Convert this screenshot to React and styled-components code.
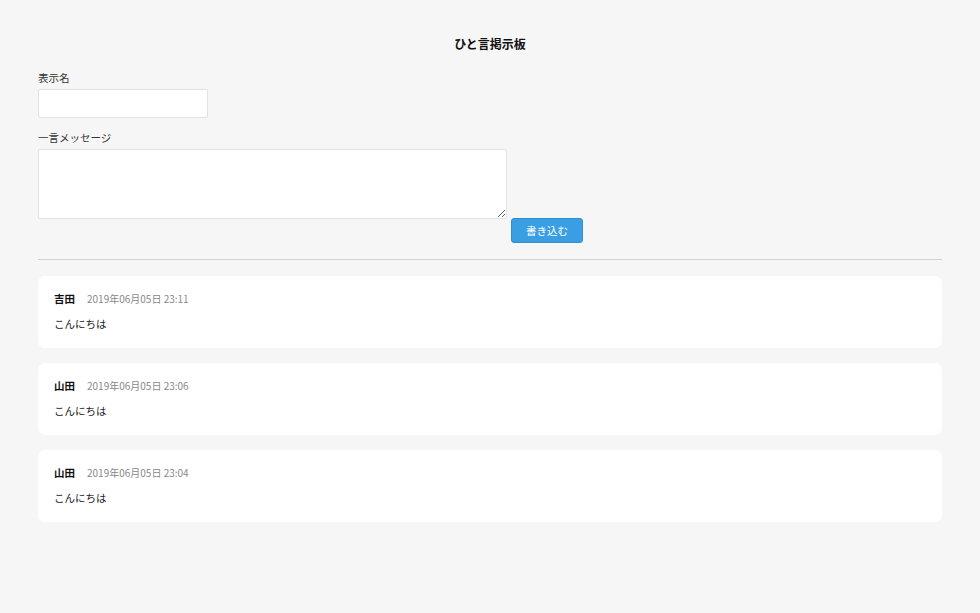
import React from "react";
import styled, { createGlobalStyle } from "styled-components";

const posts = [
  { name: "吉田", date: "2019年06月05日 23:11", body: "こんにちは" },
  { name: "山田", date: "2019年06月05日 23:06", body: "こんにちは" },
  { name: "山田", date: "2019年06月05日 23:04", body: "こんにちは" },
];

function App() {
  return (
    <>
      <GlobalStyle />
      <Page>
        <Title>ひと言掲示板</Title>
        <form onSubmit={(e) => e.preventDefault()}>
          <Field>
            <Label>表示名</Label>
            <NameInput type="text" />
          </Field>
          <Field>
            <Label>一言メッセージ</Label>
            <MessageRow>
              <MessageArea />
              <SubmitButton type="submit">書き込む</SubmitButton>
            </MessageRow>
          </Field>
        </form>
        <Divider />
        <PostList>
          {posts.map((post, i) => (
            <Card key={i}>
              <Meta>
                <Name>{post.name}</Name>
                <Time>{post.date}</Time>
              </Meta>
              <Body>{post.body}</Body>
            </Card>
          ))}
        </PostList>
      </Page>
    </>
  );
}

export default App;

const GlobalStyle = createGlobalStyle`
  html, body {
    margin: 0;
    padding: 0;
    background: #f6f6f6;
    color: #222;
    font-family: "Noto Sans CJK JP", "Noto Sans", sans-serif;
  }
`;

const Page = styled.div`
  padding: 34px 38px 40px;
`;

const Title = styled.h1`
  margin: 0 0 17px;
  text-align: center;
  font-size: 12px;
  font-weight: bold;
  line-height: 20px;
  color: #111;
`;

const Field = styled.div`
  margin-bottom: 13px;
`;

const Label = styled.label`
  display: block;
  font-size: 10.5px;
  line-height: 14px;
  margin-bottom: 4px;
  color: #333;
`;

const NameInput = styled.input`
  box-sizing: border-box;
  display: block;
  width: 170px;
  height: 29px;
  border: 1px solid #e2e2e2;
  border-radius: 2px;
  background: #fff;
  outline: none;
`;

const MessageRow = styled.div`
  display: flex;
  align-items: flex-start;
`;

const MessageArea = styled.textarea`
  box-sizing: border-box;
  width: 469px;
  height: 70px;
  border: 1px solid #e2e2e2;
  border-radius: 2px;
  background: #fff;
  outline: none;
  margin: 0;
`;

const SubmitButton = styled.button`
  box-sizing: border-box;
  width: 72px;
  height: 25px;
  margin: 69px 0 0 4px;
  border: 1px solid #2f8fd0;
  border-radius: 3px;
  background: #3a9fe2;
  color: #fff;
  font-family: inherit;
  font-size: 10.5px;
  cursor: pointer;
`;

const Divider = styled.hr`
  margin: 16px 0 16px;
  border: none;
  border-top: 1px solid #d2d2d2;
`;

const PostList = styled.div`
  display: flex;
  flex-direction: column;
  gap: 15px;
`;

const Card = styled.div`
  box-sizing: border-box;
  height: 72px;
  padding: 15px 16px;
  background: #fff;
  border-radius: 7px;
`;

const Meta = styled.div`
  display: flex;
  align-items: baseline;
  gap: 12px;
  line-height: 16px;
`;

const Name = styled.span`
  font-size: 10.5px;
  font-weight: bold;
  color: #111;
`;

const Time = styled.span`
  font-size: 10px;
  color: #888;
`;

const Body = styled.p`
  margin: 9px 0 0;
  font-size: 10.5px;
  line-height: 16px;
  color: #222;
`;
